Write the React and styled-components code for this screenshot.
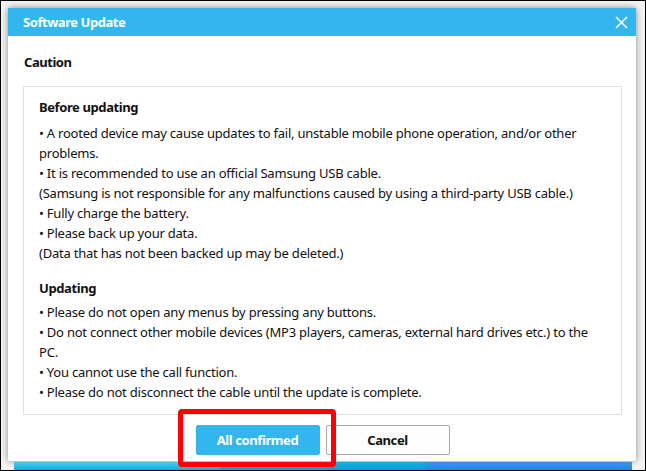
import React from 'react';
import styled, { createGlobalStyle } from 'styled-components';

const GlobalStyle = createGlobalStyle`
    html, body {
        margin: 0;
        padding: 0;
        background: #fff;
    }
    * {
        box-sizing: border-box;
    }
`;

const Frame = styled.div`
    position: relative;
    width: 646px;
    height: 471px;
    border: 1px solid #000;
    background: #f4f4f4;
    padding: 7px 7px 0 7px;
    overflow: hidden;
    font-family: "Segoe UI", "Noto Sans", "Open Sans", sans-serif;
    color: #111;
`;

const Dialog = styled.div`
    display: flex;
    flex-direction: column;
    width: 628px;
    height: 453px;
    background: #fff;
    box-shadow: 0 0 7px rgba(0, 0, 0, 0.45);
    border-radius: 2px;
`;

const TitleBar = styled.div`
    display: flex;
    align-items: center;
    justify-content: space-between;
    height: 28px;
    padding: 0 8px 0 15px;
    background: #33b6ee;
    color: #fff;
    font-size: 13px;
    font-weight: bold;
    letter-spacing: -0.45px;
`;

const CloseButton = styled.button`
    display: flex;
    align-items: center;
    justify-content: center;
    width: 14px;
    height: 14px;
    padding: 0;
    border: none;
    background: none;
    cursor: pointer;
`;

const Body = styled.div`
    display: flex;
    flex-direction: column;
    padding: 17px 14px 0 15px;
`;

const Caution = styled.div`
    font-size: 13px;
    font-weight: bold;
    line-height: 18px;
    letter-spacing: -0.45px;
    padding-left: 1px;
    margin-bottom: 15px;
`;

const NoticeBox = styled.div`
    border: 1px solid #e1e1e1;
    padding: 10px 15px 12px 15px;
    font-size: 13px;
    line-height: 20px;
    letter-spacing: -0.22px;
`;

const Section = styled.div`
    & + & {
        margin-top: 15px;
    }
`;

const Heading = styled.div`
    font-weight: bold;
    letter-spacing: -0.4px;
    margin-bottom: ${p => p.$gap}px;
`;

const Line = styled.div``;

const Actions = styled.div`
    display: flex;
    justify-content: center;
    gap: 6px;
    margin-top: 10px;
`;

const Button = styled.button`
    width: 124px;
    height: 30px;
    border-radius: 2px;
    font-family: inherit;
    font-size: 13px;
    font-weight: bold;
    letter-spacing: -0.4px;
    cursor: pointer;
    border: 1px solid ${p => (p.$primary ? '#33b6ee' : '#a8a8a8')};
    background: ${p => (p.$primary ? '#33b6ee' : '#fdfdfd')};
    color: ${p => (p.$primary ? '#fff' : '#111')};
`;

const Backdrop = styled.div`
    display: flex;
    width: 618px;
    height: 8px;
    margin: 1px 0 0 6px;
`;

const BackdropTab = styled.div`
    flex: 1;
    background: ${p => p.$bg};
`;

const Highlight = styled.div`
    position: absolute;
    left: 177px;
    top: 408px;
    width: 158px;
    height: 58px;
    border: 5px solid #ff0000;
    border-radius: 4px;
    pointer-events: none;
`;

const beforeLines = [
    '• A rooted device may cause updates to fail, unstable mobile phone operation, and/or other problems.',
    '• It is recommended to use an official Samsung USB cable.',
    '(Samsung is not responsible for any malfunctions caused by using a third-party USB cable.)',
    '• Fully charge the battery.',
    '• Please back up your data.',
    '(Data that has not been backed up may be deleted.)',
];

const updatingLines = [
    '• Please do not open any menus by pressing any buttons.',
    '• Do not connect other mobile devices (MP3 players, cameras, external hard drives etc.) to the PC.',
    '• You cannot use the call function.',
    '• Please do not disconnect the cable until the update is complete.',
];

const CloseIcon = () => (
    <svg width="13" height="13" viewBox="0 0 13 13">
        <path d="M1 1 L12 12 M12 1 L1 12" stroke="#fff" strokeWidth="1.6" fill="none" />
    </svg>
);

export default function App() {
    return (
        <Frame>
            <GlobalStyle />
            <Dialog>
                <TitleBar>
                    <span>Software Update</span>
                    <CloseButton aria-label="Close"><CloseIcon /></CloseButton>
                </TitleBar>
                <Body>
                    <Caution>Caution</Caution>
                    <NoticeBox>
                        <Section>
                            <Heading $gap={6}>Before updating</Heading>
                            {beforeLines.map(l => <Line key={l}>{l}</Line>)}
                        </Section>
                        <Section>
                            <Heading $gap={4}>Updating</Heading>
                            {updatingLines.map(l => <Line key={l}>{l}</Line>)}
                        </Section>
                    </NoticeBox>
                    <Actions>
                        <Button $primary>All confirmed</Button>
                        <Button>Cancel</Button>
                    </Actions>
                </Body>
            </Dialog>
            <Backdrop>
                <BackdropTab $bg="linear-gradient(#4ccbee, #1ba6dc)" />
                <BackdropTab $bg="linear-gradient(#1ea9e2, #139bd7)" />
                <BackdropTab $bg="linear-gradient(#3697e6, #2687da)" />
            </Backdrop>
            <Highlight />
        </Frame>
    );
}
